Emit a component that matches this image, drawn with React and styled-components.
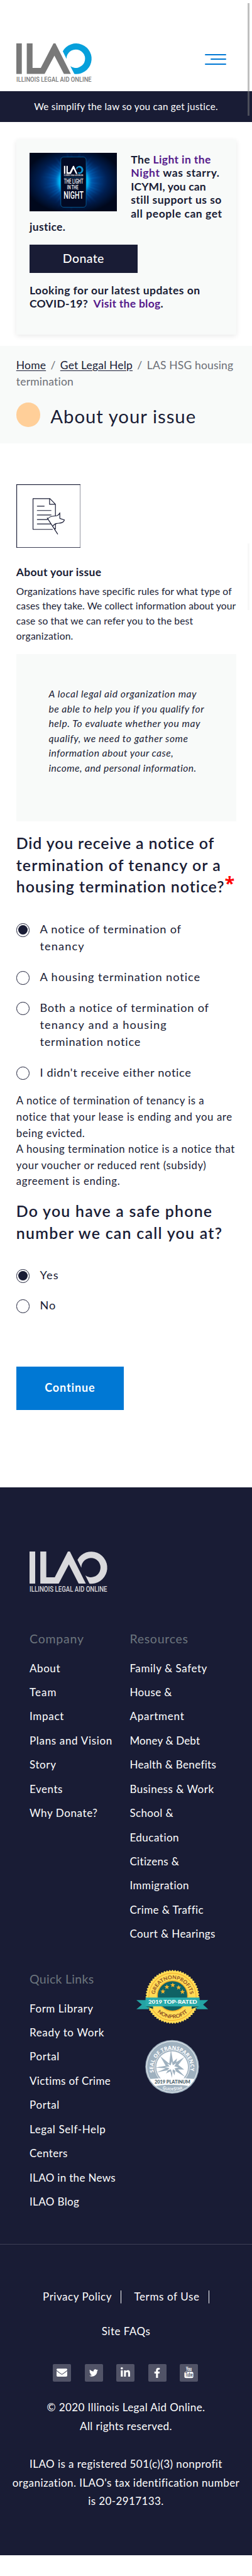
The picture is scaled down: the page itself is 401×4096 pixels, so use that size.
import React, { useLayoutEffect, useRef, useState } from 'react';
import styled, { createGlobalStyle } from 'styled-components';
import { FaEnvelope, FaTwitter, FaLinkedinIn, FaFacebookF } from 'react-icons/fa';

const navy = '#191c35';
const blue = '#0078d4';
const pale = '#f8faf9';

const GlobalStyle = createGlobalStyle`
  * { box-sizing: border-box; }
  html { overflow: hidden; }
  body { margin: 0; background: #fff; color: ${navy}; font-family: Lato, "Open Sans", sans-serif; }
  h1, h2, h3, p, ul { margin: 0; padding: 0; font-weight: 400; list-style: none; }
  a { color: inherit; text-decoration: none; }
  svg { display: block; flex: none; }
`;

const LineBox = styled.span`display: block; white-space: nowrap;`;
const LineText = styled.span`display: inline-block; white-space: pre;`;

/* One line of copy, tracked so that it is `w` pixels wide. */
function Line({ w, children }) {
  const ref = useRef(null);
  const [tracking, setTracking] = useState(0);
  useLayoutEffect(() => {
    const el = ref.current;
    const natural = el.getBoundingClientRect().width;
    setTracking((w + 1.5 - natural) / Math.max(1, el.textContent.length));
  }, [w]);
  return (
    <LineBox>
      <LineText ref={ref} style={{ letterSpacing: tracking }}>{children}</LineText>
    </LineBox>
  );
}

const Lines = ({ rows }) => rows.map(([text, w]) => <Line key={text} w={w}>{text}</Line>);

const Page = styled.div`position: relative; width: 401px; height: 4096px; overflow: hidden;`;
const ScrollThumb = styled.div`
  position: absolute; left: 394px; width: 3px; z-index: 2;
  top: ${p => p.$top}px; height: ${p => p.$height}px; background: ${p => p.$tone};
`;

const Header = styled.header`
  display: flex; justify-content: space-between; height: 144.5px; padding: 68.5px 41px 0 25.8px;
`;
const LogoArt = styled.svg`overflow: visible;`;
const MenuButton = styled.div`
  display: flex; flex-direction: column; align-items: flex-end; gap: 5.4px; padding-top: 17.2px;
`;
const MenuBar = styled.span`width: ${p => p.$w}px; height: 2.2px; border-radius: 1px; background: ${blue};`;
const Tagline = styled.div`
  height: 49px; display: flex; justify-content: center; background: ${navy}; color: #fff;
  font-size: 15.2px; line-height: 48px;
`;

const PromoArea = styled.section`height: 356.2px; padding: 28.5px 25px 0 25.8px;`;
const PromoCard = styled.div`
  height: 310.2px; padding: 20.5px 0 0 21.2px; background: ${pale};
  box-shadow: 0 2px 8px rgba(0, 0, 0, 0.09);
  font-size: 17.5px; line-height: 21.5px; font-weight: 700;
`;
const PromoTop = styled.div`display: flex; gap: 21.8px;`;
const Visited = styled.a`color: #551a8b;`;
const DonateButton = styled.a`
  display: flex; justify-content: center; width: 171.7px; height: 45.2px; margin: 17px 0;
  background: ${navy}; color: #fff; font-size: 19.5px; font-weight: 500; line-height: 43.5px;
`;
const PromoFoot = styled.div`line-height: 21px;`;

const TitleBand = styled.section`height: 155.6px; padding: 18.5px 0 0 25.8px; background: ${pale};`;
const Crumbs = styled.nav`font-size: 17.5px; line-height: 25.9px; color: #6c6f76;`;
const CrumbLink = styled.a`color: ${navy}; text-decoration: underline; text-underline-offset: 2px;`;
const Slash = styled.span`margin: 0 7.3px;`;
const TitleRow = styled.div`display: flex; gap: 15.8px; margin-top: 20px;`;
const Dot = styled.span`width: 38.6px; height: 38.8px; border-radius: 50%; background: #ffcf99;`;
const Title = styled.h1`margin-top: 4.3px; font-size: 29.3px; line-height: 36px;`;

const Main = styled.main`height: 1659.8px; padding: 64.6px 0 0 25.8px;`;
const IntroHeading = styled.h3`margin-top: 25.5px; font-size: 17.5px; line-height: 26px; font-weight: 700;`;
const Intro = styled.p`margin-top: 5.9px; font-size: 15.6px; line-height: 23.7px;`;
const Note = styled.aside`
  width: 349.8px; height: 265.6px; margin-top: 17.1px; padding: 51.6px 0 0 51.7px; background: ${pale};
  font-size: 15.6px; line-height: 23.5px; font-style: italic;
`;
const Question = styled.h2`
  display: flex; align-items: flex-end; margin-top: ${p => p.$top}px;
  font-size: 24.9px; line-height: ${p => p.$lh}px; font-weight: 600;
`;
const Required = styled.span`
  margin-bottom: 5.5px; color: #f00; font: 700 29px/34px "Open Sans", sans-serif;
`;
const Options = styled.div`
  display: flex; flex-direction: column; gap: ${p => p.$gap}px; margin-top: ${p => p.$top}px;
  font-size: 18.2px; line-height: 27.1px;
`;
const Option = styled.label`display: flex; gap: 16.2px;`;
const Radio = styled.span`
  flex: none; width: 21.4px; height: 21.4px; margin-top: 4.3px; padding: 2.2px;
  border: 1px solid ${navy}; border-radius: 50%;
`;
const RadioFill = styled.span`display: block; width: 100%; height: 100%; border-radius: 50%; background: ${navy};`;
const Help = styled.p`margin-top: 18.5px; font-size: 16.8px; line-height: 25.6px;`;
const ContinueButton = styled.a`
  display: flex; justify-content: center; width: 171.2px; height: 69px; margin-top: 83.8px;
  background: ${blue}; color: #fff; font-size: 18px; line-height: 67.5px; font-weight: 700;
`;

const Footer = styled.footer`height: 1698.1px; background: ${navy}; color: #fff; font-size: 17px;`;
const FooterTop = styled.div`height: 1203.9px; padding: 101.7px 0 0 47px; border-bottom: 1px solid #3d3f55;`;
const Columns = styled.div`
  display: grid; grid-template-columns: 159.4px 1fr; height: ${p => p.$h}px; margin-top: ${p => p.$top}px;
`;
const ColumnTitle = styled.h3`margin-bottom: 14.8px; font-size: 19.5px; line-height: 26px; color: #6c757d;`;
const LinkList = styled.div`line-height: 38.4px;`;
const Badges = styled.div`
  display: flex; flex-direction: column; align-items: center; gap: 24.6px; width: 136px; margin-top: -2.1px;
`;
const Legal = styled.nav`
  display: flex; flex-wrap: wrap; justify-content: center; padding-top: 70.1px; line-height: 26px;
`;
const LegalRow = styled.div`display: flex; width: 100%; justify-content: center; margin-bottom: 28.9px;`;
const LegalItem = styled.div`
  padding: 0 ${p => (p.$bar ? 15.4 : 0)}px 0 ${p => (p.$pad || 0)}px;
  background: linear-gradient(#fff, #fff) right 3px / ${p => (p.$bar ? '1.4px 20.5px' : '0 0')} no-repeat;
`;
const Social = styled.div`display: flex; gap: 21.5px; height: 28px; margin: 10px 0 25.8px 84.4px;`;
const SocialTile = styled.a`
  display: flex; align-items: center; justify-content: center; width: 29px; height: 28px;
  border-radius: 2px; background: #515367; font-size: ${p => p.$size}px;
`;
const SmallPrint = styled.div`
  display: flex; flex-direction: column; align-items: center; margin-bottom: 30.2px; line-height: 29.9px;
`;

function Logo({ width, height, main, accent }) {
  return (
    <LogoArt width={width} height={height} viewBox="0 0 119.7 61.5" preserveAspectRatio="none">
      <g fill={main}>
        <path d="M0 0h8.7v48.6H0z" />
        <path d="M16.6 0h9.2v39h13.1L59.1 0h3.1l24.5 48.6h-11L60.6 19.4 45 48.6H16.6z" />
        <text x="0" y="61.4" fontFamily="Roboto, sans-serif" fontWeight="500" fontSize="11.7" textLength="119.6" lengthAdjust="spacingAndGlyphs">ILLINOIS LEGAL AID ONLINE</text>
      </g>
      <path fill={accent} d="M73.9 12.5A24.5 24.3 0 1 1 92.3 48.6L86 36.2A14.8 14.6 0 1 0 79.8 24.4Z" />
    </LogoArt>
  );
}

const rays = Array.from({ length: 46 }, (_, i) => {
  const a = (i / 46) * Math.PI * 2;
  const len = 170 + ((i * 73) % 110);
  const pt = (r, t) => `${(357 + r * Math.cos(t)).toFixed(1)},${(240 + r * 0.9 * Math.sin(t)).toFixed(1)}`;
  return `${pt(60, a - 0.09)} ${pt(len, a)} ${pt(60, a + 0.09)}`;
});

function PromoPicture() {
  return (
    <svg width="139.4" height="93" viewBox="36 37 641 428" preserveAspectRatio="none">
      <defs>
        <radialGradient id="night" cx="0.5" cy="0.48" r="0.56">
          <stop offset="0" stopColor="#0080d8" /><stop offset="0.4" stopColor="#004a9c" />
          <stop offset="0.7" stopColor="#001f52" /><stop offset="1" stopColor="#00081c" />
        </radialGradient>
        <radialGradient id="ray" gradientUnits="userSpaceOnUse" cx="357" cy="240" r="250">
          <stop offset="0.3" stopColor="#00c8ff" /><stop offset="0.65" stopColor="#0078dc" stopOpacity="0.6" /><stop offset="1" stopColor="#0050b0" stopOpacity="0" />
        </radialGradient>
        <filter id="soft"><feGaussianBlur stdDeviation="4" /></filter>
        <filter id="glow" x="-50%" width="200%"><feGaussianBlur stdDeviation="13" /></filter>
      </defs>
      <rect x="36" y="37" width="641" height="428" fill="url(#night)" />
      <g fill="url(#ray)" filter="url(#soft)">{rays.map(r => <polygon key={r} points={r} />)}</g>
      <ellipse cx="357" cy="245" rx="113" ry="105" fill="#00c0ff" filter="url(#glow)" />
      <rect x="265" y="68" width="185" height="367" rx="20" fill="#020a24" stroke="#0878b8" strokeWidth="3" />
      <g fill="#fff">
        <path d="M288 132h10v59h-10zM306 132h10v48h14l24-48h7l26 59h-11l-19-38-18 38h-33z" />
        <g fontFamily="Roboto, sans-serif" fontWeight="500">
          <text x="288" y="208" fontSize="15" textLength="141" lengthAdjust="spacingAndGlyphs">ILLINOIS LEGAL AID ONLINE</text>
          <text x="288" y="264" fontSize="46" textLength="141" lengthAdjust="spacingAndGlyphs">THE LIGHT</text>
          <text x="311" y="305" fontSize="43" textLength="82" lengthAdjust="spacingAndGlyphs">IN THE</text>
          <text x="286" y="371" fontSize="74" textLength="145" lengthAdjust="spacingAndGlyphs">NIGHT</text>
        </g>
      </g>
      <path d="M377 148A28 29 0 1 1 394 190L389 177A17 18 0 1 0 382 162Z" fill="#1295cf" />
      <path d="M288 217h140" stroke="#0a6c97" strokeWidth="3" />
    </svg>
  );
}

function NoticeIcon() {
  return (
    <svg width="102.7" height="101.3" viewBox="28 28 472 466" preserveAspectRatio="none" fill="none" stroke={navy} strokeWidth="5.5" strokeLinecap="round" strokeLinejoin="round">
      <rect x="30.5" y="30.5" width="467" height="461" strokeLinejoin="miter" />
      <path d="M292 358H150V133H274L314 175V257M271 133V175H314M314 318V355L306 352" />
      <path d="M181 188H232M181 220H282M181 253H282M181 286H255M181 318H278M254 275L330 392" />
      <path d="M259 281C273 257 300 263 324 258Q340 253 346 237V278L380 289C371 314 347 311 324 315Q304 319 296 333" />
    </svg>
  );
}

const star = (cx, cy, r) => Array.from({ length: 10 }, (_, i) => {
  const a = -Math.PI / 2 + (i * Math.PI) / 5;
  const q = i % 2 ? r * 0.43 : r;
  return `${(cx + q * Math.cos(a)).toFixed(1)},${(cy + q * Math.sin(a)).toFixed(1)}`;
}).join(' ');

const scallop = Array.from({ length: 120 }, (_, i) => {
  const a = (i * Math.PI) / 60;
  const r = i % 2 ? 188 : 198;
  return `${(304 + r * Math.cos(a)).toFixed(1)},${(248 + r * Math.sin(a)).toFixed(1)}`;
}).join(' ');

function TopRatedBadge() {
  return (
    <svg width="114.5" height="86.2" viewBox="40 50 526 396">
      <defs>
        <path id="gnTop" d="M174 248A130 130 0 0 1 434 248" />
        <path id="gnBottom" d="M147 248A157 157 0 0 0 461 248" />
      </defs>
      <polygon points={scallop} fill="#ffdc56" />
      <circle cx="304" cy="248" r="173" fill="none" stroke="#f5ad2c" strokeWidth="5" />
      <circle cx="304" cy="241" r="111" fill="#0f6265" stroke="#f5ad2c" strokeWidth="7" />
      <g fill="#f7b52d">
        {[[234, 209], [263, 176], [306, 162], [349, 180], [377, 212]].map(([x, y]) => <polygon key={x} points={star(x, y, 19)} />)}
      </g>
      <g fill="#8f4f25" fontFamily="Lato, sans-serif" fontWeight="700" fontSize="37" textAnchor="middle">
        <text textLength="372" lengthAdjust="spacingAndGlyphs"><textPath href="#gnTop" startOffset="50%">GREATNONPROFITS</textPath></text>
        <text textLength="246" lengthAdjust="spacingAndGlyphs"><textPath href="#gnBottom" startOffset="50%">NONPROFIT</textPath></text>
      </g>
      <path d="M40 272H130V338H40L80 305ZM565 272H480V338H565L528 305Z" fill="#24a3a4" />
      <path d="M107 318H162V336ZM501 318H444V336Z" fill="#0b4c4d" />
      <path d="M107 253H503V318H107Z" fill="#2aabab" />
      <text x="127" y="296" fill="#fff" fontFamily="Lato, sans-serif" fontWeight="900" fontSize="38" textLength="357" lengthAdjust="spacingAndGlyphs">2019 TOP-RATED</text>
    </svg>
  );
}

function TransparencySeal() {
  return (
    <svg width="85.8" height="86.6" viewBox="48 50 394 398">
      <defs>
        <path id="sealTop" d="M114 300A136 136 0 1 1 376 290" />
        <clipPath id="sealClip"><circle cx="245" cy="249" r="186" /></clipPath>
        <path id="sealBottom" d="M165 409Q245 436 330 409" />
      </defs>
      <circle cx="245" cy="249" r="196" fill="#9fb1bf" />
      <circle cx="245" cy="249" r="186" fill="none" stroke="#fff" strokeWidth="4" />
      <circle cx="245" cy="252" r="126" fill="none" stroke="#fff" strokeWidth="4" />
      <circle cx="245" cy="252" r="116" fill="#fff" />
      <path fill="#9fb1bf" d="M236 124L252 214 281 188 275 216 334 179 290 235 333 269 287 268 340 322 268 280 262 312 248 280 243 330 232 282 200 298 214 274 133 290 198 260 122 255 198 242 158 172 224 226Z" />
      <path fill="#fff" d="M242 210L250 238 275 222 261 245 292 254 263 260 274 282 251 267 244 295 236 267 208 278 225 258 190 252 226 246 208 226 235 239Z" />
      <g clipPath="url(#sealClip)">
        <path d="M50 342Q245 318 440 342L400 394Q245 366 90 394Z" fill="#fff" />
      </g>
      <text fill="#fff" fontFamily="Open Sans, sans-serif" fontWeight="700" fontSize="38" textAnchor="middle" textLength="480" lengthAdjust="spacingAndGlyphs"><textPath href="#sealTop" startOffset="50%">SEAL OF TRANSPARENCY</textPath></text>
      <text x="117" y="370" fill="#455a64" fontFamily="Lato, sans-serif" fontWeight="900" fontSize="36" textLength="261" lengthAdjust="spacingAndGlyphs">2019 PLATINUM</text>
      <text fill="#fff" fontFamily="Open Sans, sans-serif" fontWeight="600" fontSize="26" textAnchor="middle"><textPath href="#sealBottom" startOffset="50%"><tspan fontSize="32">G</tspan>UIDE<tspan fontSize="32">S</tspan>TAR</textPath></text>
    </svg>
  );
}

function YouTubeMark() {
  return (
    <svg width="15" height="21" viewBox="0 -1 15 21">
      <text x="3" y="7.3" fill="#fff" fontFamily="Roboto, sans-serif" fontWeight="700" fontSize="8.2" textLength="9" lengthAdjust="spacingAndGlyphs">You</text>
      <rect x="0.4" y="8.3" width="14.2" height="10" rx="2.5" fill="#fff" />
      <text x="1.7" y="16.4" fill="#515367" fontFamily="Roboto, sans-serif" fontWeight="700" fontSize="8.4" textLength="11.8" lengthAdjust="spacingAndGlyphs">Tube</text>
    </svg>
  );
}

const Choice = ({ on, rows }) => (
  <Option>
    <Radio>{on && <RadioFill />}</Radio>
    <div><Lines rows={rows} /></div>
  </Option>
);

const company = [['About', 47.6], ['Team', 42], ['Impact', 53.5], ['Plans and Vision', 130.4], ['Story', 41], ['Events', 51.4], ['Why Donate?', 107]];
const resources = [['Family & Safety', 122], ['House &', 66], ['Apartment', 85.7], ['Money & Debt', 110.3], ['Health & Benefits', 136], ['Business & Work', 132.7], ['School &', 68], ['Education', 77.5], ['Citizens &', 77.5], ['Immigration', 93.5], ['Crime & Traffic', 115.3], ['Court & Hearings', 135]];
const quickA = [['Form Library', 100], ['Ready to Work', 117.6], ['Portal', 46.5]];
const quickB = [['Victims of Crime', 128], ['Portal', 46.5], ['Legal Self-Help', 120], ['Centers', 59.3], ['ILAO in the News', 135.5], ['ILAO Blog', 77.7]];

export default function App() {
  return (
    <Page>
      <GlobalStyle />
      <ScrollThumb $top={4.6} $height={179.5} $tone="rgba(128,128,128,0.5)" />
      <ScrollThumb $top={864} $height={106} $tone="#f8f8f8" />
      <Header>
        <Logo width="119.7" height="61.5" main="#797979" accent="#07a0db" />
        <MenuButton><MenuBar $w={34.3} /><MenuBar $w={25.4} /><MenuBar $w={34.3} /></MenuButton>
      </Header>
      <Tagline><Line w={291.5}>We simplify the law so you can get justice.</Line></Tagline>

      <PromoArea>
        <PromoCard>
          <PromoTop>
            <PromoPicture />
            <div>
              <Line w={126}>The <Visited>Light in the</Visited></Line>
              <Line w={140}><Visited>Night</Visited> was starry.</Line>
              <Lines rows={[['ICYMI, you can', 118], ['still support us so', 143.5], ['all people can get', 144]]} />
            </div>
          </PromoTop>
          <Line w={56}>justice.</Line>
          <DonateButton><Line w={64.5}>Donate</Line></DonateButton>
          <PromoFoot>
            <Line w={270}>Looking for our latest updates on</Line>
            <Line w={211.5}>COVID-19?  <Visited>Visit the blog</Visited>.</Line>
          </PromoFoot>
        </PromoCard>
      </PromoArea>

      <TitleBand>
        <Crumbs>
          <Line w={344}><CrumbLink>Home</CrumbLink><Slash>/</Slash><CrumbLink>Get Legal Help</CrumbLink><Slash>/</Slash>LAS HSG housing</Line>
          <Line w={90}>termination</Line>
        </Crumbs>
        <TitleRow><Dot /><Title><Line w={230.5}>About your issue</Line></Title></TitleRow>
      </TitleBand>

      <Main>
        <NoticeIcon />
        <IntroHeading><Line w={134}>About your issue</Line></IntroHeading>
        <Intro><Lines rows={[['Organizations have specific rules for what type of', 341.4], ['cases they take. We collect information about your', 348.3], ['case so that we can refer you to the best', 279.8], ['organization.', 89.5]]} /></Intro>
        <Note><Lines rows={[['A local legal aid organization may', 234], ['be able to help you if you qualify for', 246], ['help. To evaluate whether you may', 240], ['qualify, we need to gather some', 220.5], ['information about your case,', 197], ['income, and personal information.', 233.5]]} /></Note>

        <Question $top={17.3} $lh={34.3}>
          <div><Lines rows={[['Did you receive a notice of', 314.3], ['termination of tenancy or a', 325], ['housing termination notice?', 331]]} /></div>
          <Required>*</Required>
        </Question>
        <Options $top={37.6} $gap={21.8}>
          <Choice on rows={[['A notice of termination of', 224.5], ['tenancy', 70]]} />
          <Choice rows={[['A housing termination notice', 254.7]]} />
          <Choice rows={[['Both a notice of termination of', 268.5], ['tenancy and a housing', 201], ['termination notice', 160]]} />
          <Choice rows={[["I didn't receive either notice", 240]]} />
        </Options>
        <Help><Lines rows={[['A notice of termination of tenancy is a', 298.5], ['notice that your lease is ending and you are', 342.7], ['being evicted.', 108], ['A housing termination notice is a notice that', 347.3], ['your voucher or reduced rent (subsidy)', 301], ['agreement is ending.', 164]]} /></Help>

        <Question $top={16.8} $lh={35}>
          <div><Lines rows={[['Do you have a safe phone', 311], ['number we can call you at?', 327]]} /></div>
        </Question>
        <Options $top={36.1} $gap={20.9}>
          <Choice on rows={[['Yes', 29]]} />
          <Choice rows={[['No', 24.5]]} />
        </Options>
        <ContinueButton><Line w={79.3}>Continue</Line></ContinueButton>
      </Main>

      <Footer>
        <FooterTop>
          <Logo width="123.6" height="64.6" main="#d9d9dc" accent="#d9d9dc" />
          <Columns $top={61.5} $h={541}>
            <div>
              <ColumnTitle><Line w={85.4}>Company</Line></ColumnTitle>
              <LinkList><Lines rows={company} /></LinkList>
            </div>
            <div>
              <ColumnTitle><Line w={91.8}>Resources</Line></ColumnTitle>
              <LinkList><Lines rows={resources} /></LinkList>
            </div>
          </Columns>
          <Columns $top={0} $h={388}>
            <div>
              <ColumnTitle><Line w={101}>Quick Links</Line></ColumnTitle>
              <LinkList><Lines rows={quickA} /><Lines rows={quickB} /></LinkList>
            </div>
            <Badges><TopRatedBadge /><TransparencySeal /></Badges>
          </Columns>
        </FooterTop>
        <Legal>
          <LegalRow>
            <LegalItem $bar><Line w={108.5}>Privacy Policy</Line></LegalItem>
            <LegalItem $bar $pad={20}><Line w={102.6}>Terms of Use</Line></LegalItem>
          </LegalRow>
          <LegalRow><LegalItem><Line w={76}>Site FAQs</Line></LegalItem></LegalRow>
        </Legal>
        <Social>
          <SocialTile $size={17}><FaEnvelope /></SocialTile>
          <SocialTile $size={14}><FaTwitter /></SocialTile>
          <SocialTile $size={17}><FaLinkedinIn /></SocialTile>
          <SocialTile $size={16}><FaFacebookF /></SocialTile>
          <SocialTile $size={16}><YouTubeMark /></SocialTile>
        </Social>
        <SmallPrint><Lines rows={[['© 2020 Illinois Legal Aid Online.', 250.4], ['All rights reserved.', 145.5]]} /></SmallPrint>
        <SmallPrint><Lines rows={[['ILAO is a registered 501(c)(3) nonprofit', 305], ["organization. ILAO's tax identification number", 360.6], ['is 20-2917133.', 119]]} /></SmallPrint>
      </Footer>
    </Page>
  );
}
